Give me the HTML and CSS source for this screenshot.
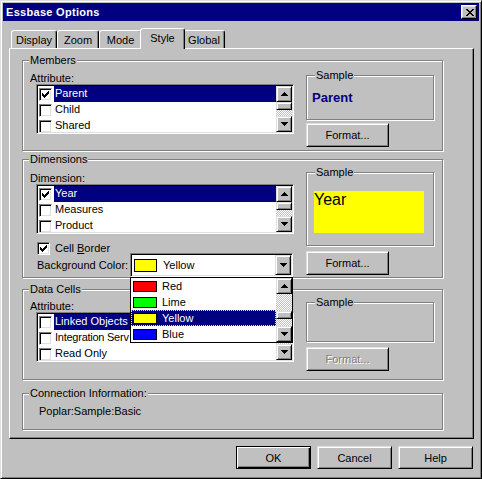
FILE: index.html
```html
<!DOCTYPE html>
<html>
<head>
<meta charset="utf-8">
<title>Essbase Options</title>
<link rel="stylesheet" href="styles.css">
</head>
<body>
<div class="window">
  <div class="titlebar">
    <span class="title">Essbase Options</span>
    <span class="close"><svg width="8" height="7" viewBox="0 0 8 7"><path d="M0 0h2v1h-2z M6 0h2v1h-2z M1 1h2v1h-2z M5 1h2v1h-2z M2 2h4v1h-4z M3 3h2v1h-2z M2 4h4v1h-4z M1 5h2v1h-2z M5 5h2v1h-2z M0 6h2v1h-2z M6 6h2v1h-2z" fill="#000"/></svg></span>
  </div>

  <div class="tabs">
    <div class="tab t-display">Display</div>
    <div class="tab t-zoom">Zoom</div>
    <div class="tab t-mode">Mode</div>
    <div class="tab t-style active">Style</div>
    <div class="tab t-global">Global</div>
  </div>

  <div class="panel">
    <!-- Members -->
    <div class="group g-members">
      <span class="legend">Members</span>
      <div class="lcol">
        <div class="lbl">Attribute:</div>
        <div class="list">
          <div class="items">
            <div class="row sel"><span class="lcb"><svg width="7" height="7" viewBox="0 0 7 7"><path d="M6 0h1v1h-1z M5 1h2v1h-2z M0 2h1v1h-1z M4 2h3v1h-3z M0 3h2v1h-2z M3 3h3v1h-3z M0 4h5v1h-5z M1 5h3v1h-3z M2 6h1v1h-1z" fill="#000"/></svg></span><span class="txt">Parent</span></div>
            <div class="row"><span class="lcb"></span><span class="txt">Child</span></div>
            <div class="row"><span class="lcb"></span><span class="txt">Shared</span></div>
          </div>
          <div class="sb">
            <div class="sbtn"><svg width="7" height="4" viewBox="0 0 7 4"><path d="M3 0h1v1h1v1h1v1h1v1h-7v-1h1v-1h1v-1h1z" fill="#000"/></svg></div>
            <div class="thumb"></div>
            <div class="track t6"></div>
            <div class="sbtn"><svg width="7" height="4" viewBox="0 0 7 4"><path d="M0 0h7v1h-1v1h-1v1h-1v1h-1v-1h-1v-1h-1v-1h-1z" fill="#000"/></svg></div>
          </div>
        </div>
      </div>
      <div class="rcol">
        <div class="sample s-members">
          <span class="legend">Sample</span>
          <div class="parent-sample">Parent</div>
        </div>
        <button class="btn fmt fmt-m">Format...</button>
      </div>
    </div>

    <!-- Dimensions -->
    <div class="group g-dims">
      <span class="legend">Dimensions</span>
      <div class="lcol">
        <div class="lbl">Dimension:</div>
        <div class="list">
          <div class="items">
            <div class="row sel"><span class="lcb"><svg width="7" height="7" viewBox="0 0 7 7"><path d="M6 0h1v1h-1z M5 1h2v1h-2z M0 2h1v1h-1z M4 2h3v1h-3z M0 3h2v1h-2z M3 3h3v1h-3z M0 4h5v1h-5z M1 5h3v1h-3z M2 6h1v1h-1z" fill="#000"/></svg></span><span class="txt">Year</span></div>
            <div class="row"><span class="lcb"></span><span class="txt">Measures</span></div>
            <div class="row"><span class="lcb"></span><span class="txt">Product</span></div>
          </div>
          <div class="sb">
            <div class="sbtn"><svg width="7" height="4" viewBox="0 0 7 4"><path d="M3 0h1v1h1v1h1v1h1v1h-7v-1h1v-1h1v-1h1z" fill="#000"/></svg></div>
            <div class="thumb"></div>
            <div class="track t6"></div>
            <div class="sbtn"><svg width="7" height="4" viewBox="0 0 7 4"><path d="M0 0h7v1h-1v1h-1v1h-1v1h-1v-1h-1v-1h-1v-1h-1z" fill="#000"/></svg></div>
          </div>
        </div>
        <div class="cbrow">
          <span class="cb"><svg width="7" height="7" viewBox="0 0 7 7"><path d="M6 0h1v1h-1z M5 1h2v1h-2z M0 2h1v1h-1z M4 2h3v1h-3z M0 3h2v1h-2z M3 3h3v1h-3z M0 4h5v1h-5z M1 5h3v1h-3z M2 6h1v1h-1z" fill="#000"/></svg></span>
          <span class="cblabel">Cell <u>B</u>order</span>
        </div>
        <div class="comborow">
          <span class="combolbl">Background Color:</span>
          <div class="combo">
            <span class="sw" style="background:#ffff00"></span>
            <span class="ctext">Yellow</span>
            <div class="sbtn cbtn"><svg width="7" height="4" viewBox="0 0 7 4"><path d="M0 0h7v1h-1v1h-1v1h-1v1h-1v-1h-1v-1h-1v-1h-1z" fill="#000"/></svg></div>

            <div class="dd">
              <div class="dditems">
                <div class="ddrow"><span class="dsw" style="background:#ff0000"></span><span class="dtext">Red</span></div>
                <div class="ddrow"><span class="dsw" style="background:#00ff00"></span><span class="dtext">Lime</span></div>
                <div class="ddrow sel"><span class="dsw" style="background:#ffff00"></span><span class="dtext">Yellow</span></div>
                <div class="ddrow"><span class="dsw" style="background:#0000ff"></span><span class="dtext">Blue</span></div>
              </div>
              <div class="sb">
                <div class="sbtn"><svg width="7" height="4" viewBox="0 0 7 4"><path d="M3 0h1v1h1v1h1v1h1v1h-7v-1h1v-1h1v-1h1z" fill="#000"/></svg></div>
                <div class="track t17"></div>
                <div class="thumb"></div>
                <div class="track t7"></div>
                <div class="sbtn"><svg width="7" height="4" viewBox="0 0 7 4"><path d="M0 0h7v1h-1v1h-1v1h-1v1h-1v-1h-1v-1h-1v-1h-1z" fill="#000"/></svg></div>
              </div>
            </div>
          </div>
        </div>
      </div>
      <div class="rcol">
        <div class="sample s-dims">
          <span class="legend">Sample</span>
          <div class="yellow">Year</div>
        </div>
        <button class="btn fmt fmt-d">Format...</button>
      </div>
    </div>

    <!-- Data Cells -->
    <div class="group g-data">
      <span class="legend">Data Cells</span>
      <div class="lcol">
        <div class="lbl">Attribute:</div>
        <div class="list">
          <div class="items">
            <div class="row sel"><span class="lcb"></span><span class="txt">Linked Objects</span></div>
            <div class="row"><span class="lcb"></span><span class="txt tight">Integration Serv</span></div>
            <div class="row"><span class="lcb"></span><span class="txt">Read Only</span></div>
          </div>
          <div class="sb">
            <div class="sbtn"><svg width="7" height="4" viewBox="0 0 7 4"><path d="M3 0h1v1h1v1h1v1h1v1h-7v-1h1v-1h1v-1h1z" fill="#000"/></svg></div>
            <div class="thumb"></div>
            <div class="track t6"></div>
            <div class="sbtn"><svg width="7" height="4" viewBox="0 0 7 4"><path d="M0 0h7v1h-1v1h-1v1h-1v1h-1v-1h-1v-1h-1v-1h-1z" fill="#000"/></svg></div>
          </div>
        </div>
      </div>
      <div class="rcol">
        <div class="sample s-data">
          <span class="legend">Sample</span>
        </div>
        <button class="btn fmt fmt-d disabled">Format...</button>
      </div>
    </div>

    <!-- Connection -->
    <div class="group g-conn">
      <span class="legend">Connection Information:</span>
      <div class="conntext">Poplar:Sample:Basic</div>
    </div>
  </div>

  <div class="footer">
    <button class="btn bbtn default">OK</button>
    <button class="btn bbtn">Cancel</button>
    <button class="btn bbtn">Help</button>
  </div>
</div>
</body>
</html>
```

FILE: styles.css
```css
* { box-sizing: border-box; }
html, body { margin: 0; padding: 0; }
body {
  background: #c0c0c0;
  font-family: "Liberation Sans", Arial, sans-serif;
  font-size: 11px;
  color: #000;
  width: 482px;
  height: 479px;
  overflow: hidden;
}

.window {
  width: 482px;
  height: 479px;
  border: 1px solid;
  border-color: #dfdfdf #000 #000 #dfdfdf;
  box-shadow: inset 1px 1px #fff, inset -1px -1px #808080;
  padding: 2px;
  display: flex;
  flex-direction: column;
}

/* title bar */
.titlebar {
  height: 18px;
  flex: none;
  background: #000080;
  display: flex;
  align-items: center;
  justify-content: space-between;
  padding: 0 2px 0 3px;
}
.title {
  color: #fff;
  font-weight: bold;
  font-size: 11px;
  letter-spacing: 0.3px;
  line-height: 13px;
}
.close {
  width: 16px;
  height: 14px;
  background: #c0c0c0;
  border: 1px solid;
  border-color: #fff #000 #000 #fff;
  box-shadow: inset -1px -1px #808080, inset 1px 1px #dfdfdf;
  display: flex;
  align-items: center;
  justify-content: center;
  padding-left: 1px;
}
.close svg, .sbtn svg, .cb svg, .lcb svg { display: block; }

/* tabs */
.tabs {
  display: flex;
  align-items: flex-end;
  height: 20px;
  margin: 7px 0 0 6px;
  padding-left: 2px;
  flex: none;
}
.tab {
  height: 18px;
  border: 1px solid #fff;
  border-bottom: none;
  border-right-color: #000;
  border-radius: 3px 3px 0 0;
  box-shadow: inset -1px 0 #808080;
  text-align: center;
  padding-top: 3px;
  line-height: 13px;
  background: #c0c0c0;
}
.t-display { width: 46px; }
.t-zoom { width: 42px; }
.t-mode { width: 43px; }
.t-style { width: 41px; }
.t-global { width: 42px; }
.tab.active {
  width: 45px;
  height: 21px;
  margin: 0 -2px -1px -2px;
  position: relative;
  z-index: 2;
  padding-top: 3px;
}

/* panel */
.panel {
  margin-left: 6px;
  width: 465px;
  height: 391px;
  flex: none;
  border: 1px solid;
  border-color: #fff #000 #000 #fff;
  box-shadow: inset -1px -1px #808080;
  padding: 11px 0 0 12px;
}

.group, .sample {
  position: relative;
  border: 1px solid #808080;
  box-shadow: inset 1px 1px #fff, 1px 1px #fff;
}
.group {
  width: 421px;
  display: flex;
  padding-left: 7px;
}
.legend {
  position: absolute;
  top: -7px;
  left: 6px;
  padding: 0 1px;
  background: #c0c0c0;
  line-height: 13px;
  white-space: nowrap;
}
.sample .legend { left: 8px; }

.g-members { height: 91px; }
.g-dims { height: 119px; margin-top: 8px; }
.g-data { height: 91px; margin-top: 11px; }
.g-conn { height: 37px; margin-top: 13px; display: block; padding: 11px 0 0 16px; }

.lcol { width: 264px; flex: none; }
.rcol { margin-left: 12px; flex: none; }
.lbl { line-height: 12px; height: 12px; }
.g-members .lcol { padding-top: 11px; }
.g-dims .lcol { padding-top: 12px; }
.g-data .lcol { padding-top: 10px; }
.g-members .rcol { padding-top: 14px; }
.g-dims .rcol, .g-data .rcol { padding-top: 12px; }

/* list box */
.list {
  display: flex;
  width: 258px;
  height: 50px;
  margin-left: 6px;
  background: #fff;
  border: 1px solid;
  border-color: #808080 #fff #fff #808080;
  box-shadow: inset 1px 1px #000, inset -1px -1px #dfdfdf;
  padding: 1px;
}
.items { flex: 1; overflow: hidden; min-width: 0; }
.row {
  height: 16px;
  display: flex;
  align-items: center;
}
.lcb, .cb {
  width: 13px;
  height: 13px;
  flex: none;
  background: #fff;
  border: 1px solid;
  border-color: #808080 #fff #fff #808080;
  box-shadow: inset 1px 1px #000, inset -1px -1px #dfdfdf;
  padding: 2px 0 0 2px;
}
.lcb { margin: 0 2px 0 1px; }
.txt {
  flex: 1;
  height: 16px;
  line-height: 14px;
  padding-left: 1px;
  white-space: nowrap;
  overflow: hidden;
}
.txt.tight { letter-spacing: -0.25px; }
.row.sel .txt { background: #000080; color: #fff; }

/* scrollbar */
.sb {
  width: 16px;
  flex: none;
  display: flex;
  flex-direction: column;
  background: repeating-conic-gradient(#c0c0c0 0 25%, #fff 0 50%) 0 0 / 2px 2px;
}
.sbtn, .thumb, .btn {
  background: #c0c0c0;
  border: 1px solid;
  border-color: #dfdfdf #000 #000 #dfdfdf;
  box-shadow: inset 1px 1px #fff, inset -1px -1px #808080;
}
.sbtn {
  width: 16px;
  height: 16px;
  flex: none;
  display: flex;
  align-items: center;
  justify-content: center;
}
.thumb { height: 8px; flex: none; }
.t6 { height: 6px; }
.t7 { height: 7px; }
.t17 { height: 17px; }

/* checkbox row */
.cbrow {
  display: flex;
  align-items: center;
  margin: 8px 0 0 7px;
  height: 13px;
}
.cblabel { margin-left: 5px; line-height: 13px; }

/* combo */
.comborow {
  display: flex;
  align-items: center;
  margin: -2px 0 0 7px;
  height: 24px;
}
.combolbl { width: 93px; flex: none; }
.combo {
  position: relative;
  width: 163px;
  height: 24px;
  flex: none;
  background: #fff;
  border: 1px solid;
  border-color: #808080 #fff #fff #808080;
  box-shadow: inset 1px 1px #000, inset -1px -1px #dfdfdf;
  padding: 1px;
  display: flex;
  align-items: center;
}
.sw {
  width: 23px;
  height: 13px;
  border: 1px solid #000;
  margin-left: 2px;
  flex: none;
}
.ctext { margin-left: 6px; }
.cbtn { margin-left: auto; height: 20px; }

/* dropdown */
.dd {
  position: absolute;
  top: calc(100% + 1px);
  left: -1px;
  width: 163px;
  height: 66px;
  z-index: 10;
  background: #fff;
  border: 1px solid #000;
  display: flex;
}
.dditems { flex: 1; }
.ddrow {
  height: 16px;
  display: flex;
  align-items: center;
}
.ddrow.sel {
  background: #000080;
  color: #fff;
  outline: 1px dotted #ffff00;
  outline-offset: -1px;
}
.dsw {
  width: 24px;
  height: 11px;
  border: 1px solid #000;
  margin-left: 2px;
  flex: none;
}
.dtext { margin-left: 5px; line-height: 16px; }

/* samples */
.sample { width: 128px; }
.s-members { height: 45px; padding: 14px 0 0 5px; }
.s-dims { height: 74px; padding: 18px 0 0 7px; }
.s-data { height: 40px; }
.parent-sample {
  color: #000080;
  font-weight: bold;
  font-size: 13px;
  line-height: 16px;
}
.yellow {
  width: 110px;
  height: 42px;
  background: #ffff00;
  font-size: 16px;
  line-height: 18px;
}

/* buttons */
.btn {
  font-family: "Liberation Sans", Arial, sans-serif;
  font-size: 11px;
  color: #000;
  padding: 0;
  display: block;
  text-align: center;
}
.fmt { width: 83px; height: 24px; }
.fmt-m { margin-top: 3px; }
.fmt-d { margin-top: 5px; }
.btn.disabled { color: #808080; text-shadow: 1px 1px #fff; }

.conntext { line-height: 13px; }

.footer {
  display: flex;
  justify-content: flex-end;
  gap: 6px;
  margin-top: 7px;
  padding-right: 6px;
  flex: none;
}
.bbtn { width: 75px; height: 23px; }
.bbtn.default {
  border: 1px solid #000;
  box-shadow: inset 1px 1px #fff, inset -1px -1px #000, inset -2px -2px #808080;
}
```
